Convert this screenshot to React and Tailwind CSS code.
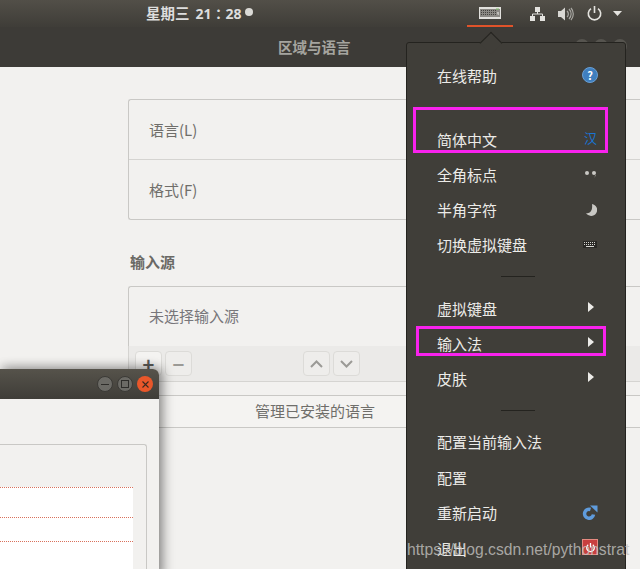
import { useState } from 'react';

const menuItems = [
  { label: '在线帮助', icon: 'help', cls: 'mt-[15px]' },
  { label: '简体中文', icon: 'han', cls: 'mt-[30px]' },
  { label: '全角标点', icon: 'dots', cls: 'mt-px' },
  { label: '半角字符', icon: 'moon', cls: 'mt-px' },
  { label: '切换虚拟键盘', icon: 'keys', cls: 'mt-px' },
  { sep: true, cls: 'h-[28px] mt-px' },
  { label: '虚拟键盘', icon: 'arrow', cls: 'mt-px' },
  { label: '输入法', icon: 'arrow', cls: 'mt-px' },
  { label: '皮肤', icon: 'arrow', cls: 'mt-px' },
  { sep: true, cls: 'h-[27px] mt-[2px]' },
  { label: '配置当前输入法', cls: '' },
  { label: '配置', cls: 'mt-[2px]' },
  { label: '重新启动', icon: 'reload', cls: 'mt-px' },
  { label: '退出', icon: 'quit', cls: 'mt-[2px]' },
];

const MenuIcon = ({ type }) => {
  if (type === 'help') {
    return (
      <span className="w-[16px] h-[16px] rounded-full bg-[#3f7fbf] border border-[#6a9fd4] flex items-center justify-center text-white text-[11px] font-bold leading-none">?</span>
    );
  }
  if (type === 'han') return <span className="text-[#1a74d2] text-[13px] leading-none -mt-[4px] mr-px">汉</span>;
  if (type === 'dots') {
    return (
      <svg width="14" height="10" viewBox="0 0 14 10">
        <circle cx="3" cy="4" r="2" fill="#c9c8c4" />
        <circle cx="10" cy="4" r="2" fill="#c9c8c4" />
        <path d="M11 6l1 0-1.5 3z" fill="#8c8a85" />
      </svg>
    );
  }
  if (type === 'moon') {
    return (
      <svg width="12" height="13" viewBox="0 0 12 13" className="mr-px">
        <path d="M7 1a6 6 0 1 1-6 9c3 1 7-1 6-9z" fill="#c9c8c4" />
      </svg>
    );
  }
  if (type === 'keys') {
    return (
      <svg width="14" height="7" viewBox="0 0 14 7" className="mr-px">
        <rect width="14" height="7" fill="#2a2926" />
        <path d="M1 1.5h12M1 3.5h12" stroke="#d8d7d3" strokeDasharray="1 1" />
        <path d="M3 5.5h8" stroke="#d8d7d3" />
      </svg>
    );
  }
  if (type === 'arrow') {
    return (
      <svg width="6" height="10" viewBox="0 0 6 10" className="mr-[4px] -mt-[2px]">
        <path d="M0 0l6 5-6 5z" fill="#ecebe8" />
      </svg>
    );
  }
  if (type === 'reload') {
    return (
      <svg width="16" height="15" viewBox="0 0 16 15">
        <path d="M11.5 9.5A4.5 4.5 0 1 1 8.5 4.5" fill="none" stroke="#5f9bdc" strokeWidth="3.5" />
        <path d="M8 0.5h7.5V7.5z" fill="#5f9bdc" />
      </svg>
    );
  }
  if (type === 'quit') {
    return (
      <span className="w-[16px] h-[16px] -mt-[2px] bg-[#c8403f] border border-[#e58a80] flex items-center justify-center">
        <svg width="11" height="11" viewBox="0 0 11 11" fill="none" stroke="#fff" strokeWidth="1.3">
          <path d="M3.2 2.8a3.8 3.8 0 1 0 4.6 0M5.5 1v4.5" />
        </svg>
      </span>
    );
  }
  return null;
};

const TrayIcons = () => (
  <div className="flex items-center h-[27px] ml-auto mr-[18px]">
    <div className="w-[46px] h-[27px] flex items-center justify-center border-b-2 border-[#e0532a]">
      <svg width="22" height="12" viewBox="0 0 22 12">
        <rect width="22" height="12" fill="#e2e1dd" />
        <rect x="1" y="2" width="20" height="8" fill="#8b8984" />
        <path d="M2 3.5h15M2 5.5h15M2 7.5h17" stroke="#45433f" strokeDasharray="1 1" />
        <path d="M17 2h3" stroke="#7fc06a" />
        <path d="M19 5v3" stroke="#f2f1ee" />
      </svg>
    </div>
    <svg width="15" height="14" viewBox="0 0 15 14" className="ml-[17px]">
      <path d="M5 0h5v5H5zM0 9h5v5H0zM10 9h5v5h-5z" fill="#e4e3df" />
      <path d="M7.5 5v2M2.5 9V7h10v2" stroke="#e4e3df" fill="none" />
    </svg>
    <svg width="16" height="14" viewBox="0 0 16 14" className="ml-[13px]">
      <path d="M0 4h3l4-3.5v13L3 10H0z" fill="#d8d7d3" />
      <path d="M9 4a4 4 0 0 1 0 6M11 2a7 7 0 0 1 0 10M13 1a9 9 0 0 1 0 12" stroke="#a9a8a3" fill="none" strokeWidth="1.2" />
    </svg>
    <svg width="15" height="15" viewBox="0 0 15 15" className="ml-[13px]" fill="none" stroke="#e4e3df" strokeWidth="1.6">
      <path d="M4 2.6a6.2 6.2 0 1 0 7 0M7.5 0v7" />
    </svg>
    <svg width="9" height="5" viewBox="0 0 9 5" className="ml-[11px]">
      <path d="M0 0h9L4.5 5z" fill="#e4e3df" />
    </svg>
  </div>
);

const Keycap = ({ children, className = '' }) => (
  <div className={`w-[27px] h-[25px] rounded-[4px] border border-[#dcdbd8] bg-[#eeedeb] flex items-center justify-center ${className}`}>
    {children}
  </div>
);

export default function App() {
  const [items] = useState(menuItems);

  return (
    <div className="relative w-[640px] h-[569px] overflow-hidden bg-[#f2f1ef] font-['Noto_Sans_CJK_SC','Noto_Sans',sans-serif]">
      {/* top bar */}
      <div className="h-[27px] bg-gradient-to-b from-[#524f48] to-[#3f3d38] flex items-center">
        <div className="ml-[146px] flex items-center text-[#ddd] text-[14.5px] font-bold leading-none">
          <span>星期三</span>
          <span className="ml-[6px] text-[14px] font-['Open_Sans','Noto_Sans_CJK_TC',sans-serif]">21：28</span>
          <span className="ml-[3px] mb-[4px] w-[8px] h-[8px] rounded-full bg-[#dbdad6]" />
        </div>
        <TrayIcons />
      </div>

      {/* settings window */}
      <div className="h-[40px] bg-[#3d3b37] flex items-center">
        <span className="ml-[278px] text-[14.5px] font-bold text-[#a5a49f] leading-none">区域与语言</span>
      </div>

      <div className="ml-[128px] pt-[32px]">
        <div className="h-[121px] border border-r-0 border-[#c9c8c5] rounded-l-[3px] text-[#6f6e6a] text-[15px]">
          <div className="h-[60px] border-b border-[#d5d4d1] flex items-center pl-[20px] pt-px">语言(L)</div>
          <div className="h-[60px] flex items-center pl-[20px]">格式(F)</div>
        </div>
        <div className="mt-[31px] ml-[2px] text-[15px] font-bold text-[#6a6965] leading-[22px]">输入源</div>
        <div className="mt-[13px] h-[61px] border border-r-0 border-[#c9c8c5] rounded-tl-[3px] flex items-center pl-[20px] text-[15px] text-[#77767a]">
          未选择输入源
        </div>
        <div className="h-[36px] -mt-px bg-[#ebeae8] border-b border-l border-[#d5d4d1] flex items-center pl-[6px]">
          <Keycap className="bg-[#f4f3f1]">
            <span className="text-[#5d5c58] text-[20px] font-bold leading-none">+</span>
          </Keycap>
          <Keycap className="ml-[3px]">
            <span className="text-[#9b9a96] text-[20px] font-bold leading-none">−</span>
          </Keycap>
          <Keycap className="ml-[111px]">
            <svg width="13" height="8" viewBox="0 0 13 8" fill="none" stroke="#9b9a96" strokeWidth="2"><path d="M1 7l5.5-5.5L12 7" /></svg>
          </Keycap>
          <Keycap className="ml-[3px]">
            <svg width="13" height="8" viewBox="0 0 13 8" fill="none" stroke="#9b9a96" strokeWidth="2"><path d="M1 1l5.5 5.5L12 1" /></svg>
          </Keycap>
        </div>
        <div className="mt-[13px] h-[33px] border-y border-[#c9c8c5] bg-[#f4f3f1] flex items-center pl-[127px] text-[15px] text-[#6f6e6a]">
          管理已安装的语言
        </div>
      </div>

      {/* second window, lower left */}
      <div className="absolute left-0 top-[369px] w-[159px] h-[210px] bg-[#f2f1ef] rounded-tr-[6px] shadow-[4px_0_12px_rgba(0,0,0,0.4),0_-4px_10px_rgba(0,0,0,0.12)]">
        <div className="h-[30px] rounded-tr-[6px] bg-gradient-to-b from-[#56534b] to-[#3f3d38] flex items-center justify-end pr-[6px] gap-[4px]">
          <div className="w-[16px] h-[16px] rounded-full bg-[#6b6a65] border border-[#3b3a36] flex items-center justify-center">
            <div className="w-[8px] h-px bg-[#2e2d2a]" />
          </div>
          <div className="w-[16px] h-[16px] rounded-full bg-[#6b6a65] border border-[#3b3a36] flex items-center justify-center">
            <div className="w-[8px] h-[8px] border border-[#2e2d2a]" />
          </div>
          <div className="w-[16px] h-[16px] rounded-full bg-[#e9572a] flex items-center justify-center">
            <svg width="7" height="7" viewBox="0 0 7 7" stroke="#3a2a20" strokeWidth="1.1"><path d="M0.5 0.5l6 6M6.5 0.5l-6 6" /></svg>
          </div>
        </div>
        <div className="mt-[45px] w-[147px] h-[140px] border-t border-r border-[#c9c8c5] rounded-tr-[3px] pt-[42px]">
          <div className="w-[133px] bg-white">
            <div className="h-[30px] border-t border-dotted border-[#d9715c]" />
            <div className="h-[24px] border-t border-dotted border-[#d9715c]" />
            <div className="h-[30px] border-t border-dotted border-[#d9715c]" />
          </div>
        </div>
      </div>

      {/* header buttons peeking out behind the menu */}
      <div className="absolute left-[575px] top-[39px] flex gap-[5px]">
        <div className="w-[14px] h-[14px] rounded-full bg-[#56544f]" />
        <div className="w-[14px] h-[14px] rounded-full bg-[#56544f]" />
        <div className="w-[14px] h-[14px] rounded-full bg-[#56544f]" />
      </div>

      {/* indicator menu */}
      <div className="absolute left-[406px] top-[42px] w-[220px] h-[540px] bg-[#403e39] border border-[#24231f] rounded-t-[3px] pl-[30px] pr-[27px]">
        <div className="absolute left-[76px] -top-[8px] w-[16px] h-[16px] rotate-45 bg-[#403e39] border-l border-t border-[#24231f]" />
        {items.map((item, i) =>
          item.sep ? (
            <div key={i} className={`flex items-center justify-center ${item.cls}`}>
              <div className="w-[34px] h-px bg-[#24231f]" />
            </div>
          ) : (
            <div key={i} className={`h-[34px] flex items-center justify-between text-[15px] text-[#ecebe8] leading-none ${item.cls}`}>
              <span>{item.label}</span>
              {item.icon && <MenuIcon type={item.icon} />}
            </div>
          )
        )}
      </div>

      {/* annotation boxes */}
      <div className="absolute left-[413px] top-[107px] w-[195px] h-[46px] border-[3px] border-[#f922ee]" />
      <div className="absolute left-[416px] top-[326px] w-[190px] h-[30px] border-[3px] border-[#f922ee]" />

      {/* watermark */}
      <div className="absolute left-[407px] top-[539px] text-[15.7px] leading-[22px] whitespace-nowrap text-[#c4c3c0]/80 font-['Liberation_Sans',sans-serif]">
        https://blog.csdn.net/pythonstrat
      </div>
    </div>
  );
}
